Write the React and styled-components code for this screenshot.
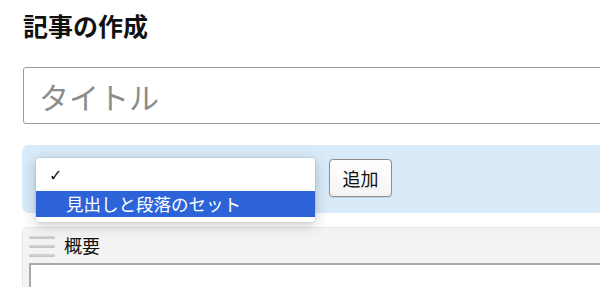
import React from "react";
import styled, { createGlobalStyle } from "styled-components";

const Global = createGlobalStyle`
  html, body { margin: 0; padding: 0; background: #fff; overflow: hidden; }
  body { font-family: "Noto Sans CJK JP", "Noto Sans", sans-serif; color: #111; }
`;

const Page = styled.div`
  width: 600px;
  height: 287px;
  overflow: hidden;
  padding-left: 22px;
  box-sizing: border-box;
`;

const Heading = styled.h2`
  margin: 0;
  padding-top: 8px;
  font-size: 25px;
  line-height: 34px;
  font-weight: 700;
  padding-left: 1px;
`;

const TitleInput = styled.input`
  display: block;
  margin: 25px 0 0 1px;
  width: 640px;
  height: 57px;
  box-sizing: border-box;
  border: 1px solid #9a9a9a;
  border-radius: 3px;
  padding: 0 15px;
  font-family: inherit;
  font-size: 30px;
  color: #111;
  &::placeholder { color: #8c8c8c; }
`;

const AddPanel = styled.div`
  position: relative;
  margin-top: 21px;
  width: 640px;
  height: 68px;
  background: #d9eaf8;
  border-radius: 7px;
  display: flex;
  align-items: center;
  padding-left: 14px;
  gap: 14px;
  box-sizing: border-box;
`;

const SelectBox = styled.div`
  width: 279px;
  height: 34px;
`;

const AddButton = styled.button`
  width: 63px;
  height: 38px;
  margin-top: -2px;
  border: 1px solid #8e8e8e;
  border-radius: 4px;
  background: linear-gradient(#ffffff, #f4f4f4);
  font-family: inherit;
  font-size: 18px;
  color: #111;
  padding: 0;
  box-shadow: 0 0.5px 1px rgba(0,0,0,0.1);
`;

const Popup = styled.ul`
  position: absolute;
  left: 14px;
  top: 13px;
  width: 279px;
  margin: 0;
  padding: 0 0 5px;
  list-style: none;
  background: #fff;
  border-radius: 3px;
  box-shadow: 0 3px 14px rgba(0,0,0,0.22), 0 0 0 0.5px rgba(0,0,0,0.12);
  z-index: 2;
`;

const Option = styled.li`
  height: ${p => p.h}px;
  display: flex;
  align-items: center;
  padding-left: ${p => p.indent}px;
  font-size: 17.5px;
  line-height: 1;
  color: ${p => (p.active ? "#fff" : "#111")};
  background: ${p => (p.active ? "#2c63d8" : "transparent")};
`;

const Check = styled.span`
  font-family: "DejaVu Sans", sans-serif;
  font-size: 16px;
  font-weight: 700;
  margin-top: 3px;
`;

const Section = styled.div`
  margin-top: 14px;
  width: 640px;
  height: 80px;
  background: #f3f3f3;
  border-radius: 5px 0 0 0;
  border: 1px solid #e6e6e6;
  box-sizing: border-box;
  padding: 0 0 0 6px;
`;

const SectionHead = styled.div`
  display: flex;
  align-items: center;
  height: 34px;
  gap: 9px;
`;

const Handle = styled.div`
  width: 26px;
  display: flex;
  flex-direction: column;
  gap: 6px;
  margin-top: 2px;
  span {
    display: block;
    height: 3px;
    background: linear-gradient(#d6d6d6, #c4c4c4);
    border-radius: 1px;
  }
`;

const SectionTitle = styled.span`
  font-size: 18px;
  color: #111;
`;

const Body = styled.div`
  height: 40px;
  border: 2px solid #a9a9a9;
  border-right: none;
  border-bottom: none;
  background: #fff;
  margin-top: 1px;
`;

export default function App() {
  return (
    <Page>
      <Global />
      <Heading>記事の作成</Heading>
      <TitleInput placeholder="タイトル" />
      <AddPanel>
        <SelectBox />
        <AddButton>追加</AddButton>
        <Popup>
          <Option h={33} indent={13}><Check>✓</Check></Option>
          <Option h={26} indent={30} active>見出しと段落のセット</Option>
        </Popup>
      </AddPanel>
      <Section>
        <SectionHead>
          <Handle><span /><span /><span /></Handle>
          <SectionTitle>概要</SectionTitle>
        </SectionHead>
        <Body />
      </Section>
    </Page>
  );
}
